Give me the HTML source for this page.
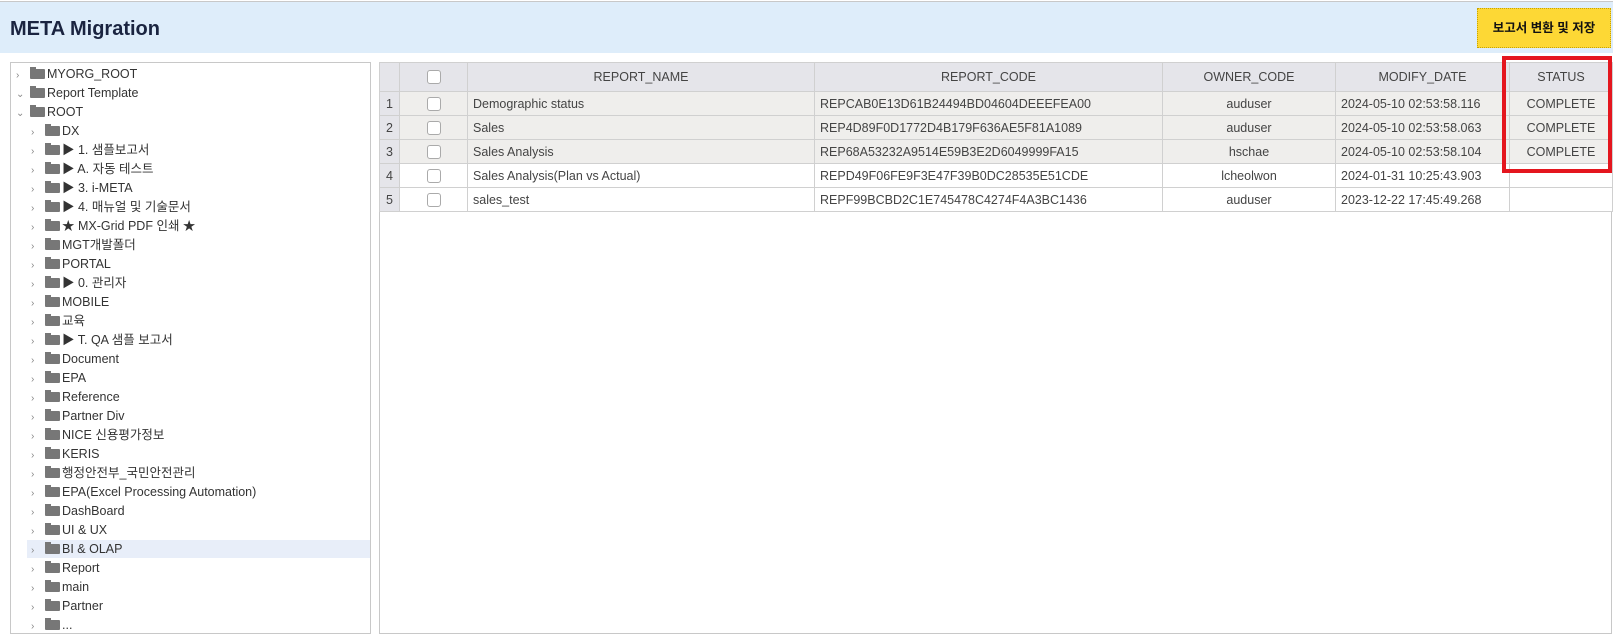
<!DOCTYPE html>
<html><head><meta charset="utf-8"><style>
body{margin:0;width:1613px;height:622px;overflow:hidden;background:#fff;font-family:"Liberation Sans","Noto Sans CJK KR",sans-serif;position:relative}
.hdr{position:absolute;left:0;top:1px;width:1613px;height:51px;background:#deedfa;border-top:1px solid #c8c8c8}
.title{position:absolute;left:10px;top:16px;font-size:20px;font-weight:bold;color:#1a2440}
.btn{position:absolute;left:1477px;top:6px;width:132px;height:38px;background:#fdd835;border:1px dotted #c9a400;font-size:12.5px;font-weight:bold;color:#111;text-align:center;line-height:38px}
.tree{position:absolute;left:10px;top:62px;width:359px;height:570px;border:1px solid #c8c8c8;overflow:hidden}
.n{position:absolute;height:18px;font-size:12.5px;color:#333;line-height:18px;white-space:nowrap}
.n .c{display:inline-block;width:10px;color:#888;font-size:10px}
.f{display:inline-block;width:15px;height:10px;background:#777;border-radius:1px;margin:0 2px 0 4px;vertical-align:-1px;position:relative}
.f:before{content:"";position:absolute;left:0;top:-2px;width:6px;height:3px;background:#777}
.grid{position:absolute;left:379px;top:62px;width:1231px;height:570px;border:1px solid #c8c8c8}
table{border-collapse:collapse;table-layout:fixed;position:absolute;left:-1px;top:-1px;font-size:12.5px;color:#444}
td{border:1px solid #d0d0d0;height:23px;padding:0 5px;white-space:nowrap;overflow:hidden}
tr.h td{background:#e5e5ea;height:28px;text-align:center}
tr.g td{background:#efeeec}
tr.w td{background:#fff}
td.r{background:#e5e5ea!important;text-align:center;padding:0}
.cb{display:inline-block;width:12px;height:12px;border:1px solid #aaa;border-radius:3px;background:#fff;vertical-align:middle}
.red{position:absolute;left:1502px;top:56px;width:102px;height:109px;border:4px solid #e4161e}
</style></head><body>
<div class="hdr"><div class="title">META Migration</div><div class="btn">보고서 변환 및 저장</div></div>
<div class="tree">
<div class="n" style="left:5px;top:2px"><span class="c">›</span><span class="f"></span>MYORG_ROOT</div>
<div class="n" style="left:5px;top:21px"><span class="c">⌄</span><span class="f"></span>Report Template</div>
<div class="n" style="left:5px;top:40px"><span class="c">⌄</span><span class="f"></span>ROOT</div>
<div class="n" style="left:20px;top:59px"><span class="c">›</span><span class="f"></span>DX</div>
<div class="n" style="left:20px;top:78px"><span class="c">›</span><span class="f"></span>▶ 1. 샘플보고서</div>
<div class="n" style="left:20px;top:97px"><span class="c">›</span><span class="f"></span>▶ A. 자동 테스트</div>
<div class="n" style="left:20px;top:116px"><span class="c">›</span><span class="f"></span>▶ 3. i-META</div>
<div class="n" style="left:20px;top:135px"><span class="c">›</span><span class="f"></span>▶ 4. 매뉴얼 및 기술문서</div>
<div class="n" style="left:20px;top:154px"><span class="c">›</span><span class="f"></span>★ MX-Grid PDF 인쇄 ★</div>
<div class="n" style="left:20px;top:173px"><span class="c">›</span><span class="f"></span>MGT개발폴더</div>
<div class="n" style="left:20px;top:192px"><span class="c">›</span><span class="f"></span>PORTAL</div>
<div class="n" style="left:20px;top:211px"><span class="c">›</span><span class="f"></span>▶ 0. 관리자</div>
<div class="n" style="left:20px;top:230px"><span class="c">›</span><span class="f"></span>MOBILE</div>
<div class="n" style="left:20px;top:249px"><span class="c">›</span><span class="f"></span>교육</div>
<div class="n" style="left:20px;top:268px"><span class="c">›</span><span class="f"></span>▶ T. QA 샘플 보고서</div>
<div class="n" style="left:20px;top:287px"><span class="c">›</span><span class="f"></span>Document</div>
<div class="n" style="left:20px;top:306px"><span class="c">›</span><span class="f"></span>EPA</div>
<div class="n" style="left:20px;top:325px"><span class="c">›</span><span class="f"></span>Reference</div>
<div class="n" style="left:20px;top:344px"><span class="c">›</span><span class="f"></span>Partner Div</div>
<div class="n" style="left:20px;top:363px"><span class="c">›</span><span class="f"></span>NICE 신용평가정보</div>
<div class="n" style="left:20px;top:382px"><span class="c">›</span><span class="f"></span>KERIS</div>
<div class="n" style="left:20px;top:401px"><span class="c">›</span><span class="f"></span>행정안전부_국민안전관리</div>
<div class="n" style="left:20px;top:420px"><span class="c">›</span><span class="f"></span>EPA(Excel Processing Automation)</div>
<div class="n" style="left:20px;top:439px"><span class="c">›</span><span class="f"></span>DashBoard</div>
<div class="n" style="left:20px;top:458px"><span class="c">›</span><span class="f"></span>UI &amp; UX</div>
<div style="position:absolute;left:16px;top:477px;width:343px;height:18px;background:#e8eef9"></div>
<div class="n" style="left:20px;top:477px"><span class="c">›</span><span class="f"></span>BI &amp; OLAP</div>
<div class="n" style="left:20px;top:496px"><span class="c">›</span><span class="f"></span>Report</div>
<div class="n" style="left:20px;top:515px"><span class="c">›</span><span class="f"></span>main</div>
<div class="n" style="left:20px;top:534px"><span class="c">›</span><span class="f"></span>Partner</div>
<div class="n" style="left:20px;top:553px"><span class="c">›</span><span class="f"></span>...</div>
</div>
<div class="grid">
<table style="width:1233px">
<colgroup><col style="width:20px"><col style="width:68px"><col style="width:347px"><col style="width:348px"><col style="width:173px"><col style="width:174px"><col style="width:103px"></colgroup>
<tr class="h"><td class="r"></td><td style="text-align:center"><span class="cb"></span></td><td>REPORT_NAME</td><td>REPORT_CODE</td><td>OWNER_CODE</td><td>MODIFY_DATE</td><td>STATUS</td></tr>
<tr class="g"><td class="r">1</td><td style="text-align:center"><span class="cb"></span></td><td>Demographic status</td><td>REPCAB0E13D61B24494BD04604DEEEFEA00</td><td style="text-align:center">auduser</td><td>2024-05-10 02:53:58.116</td><td style="text-align:center">COMPLETE</td></tr>
<tr class="g"><td class="r">2</td><td style="text-align:center"><span class="cb"></span></td><td>Sales</td><td>REP4D89F0D1772D4B179F636AE5F81A1089</td><td style="text-align:center">auduser</td><td>2024-05-10 02:53:58.063</td><td style="text-align:center">COMPLETE</td></tr>
<tr class="g"><td class="r">3</td><td style="text-align:center"><span class="cb"></span></td><td>Sales Analysis</td><td>REP68A53232A9514E59B3E2D6049999FA15</td><td style="text-align:center">hschae</td><td>2024-05-10 02:53:58.104</td><td style="text-align:center">COMPLETE</td></tr>
<tr class="w"><td class="r">4</td><td style="text-align:center"><span class="cb"></span></td><td>Sales Analysis(Plan vs Actual)</td><td>REPD49F06FE9F3E47F39B0DC28535E51CDE</td><td style="text-align:center">lcheolwon</td><td>2024-01-31 10:25:43.903</td><td></td></tr>
<tr class="w"><td class="r">5</td><td style="text-align:center"><span class="cb"></span></td><td>sales_test</td><td>REPF99BCBD2C1E745478C4274F4A3BC1436</td><td style="text-align:center">auduser</td><td>2023-12-22 17:45:49.268</td><td></td></tr>
</table>
</div>
<div class="red"></div>
</body></html>
